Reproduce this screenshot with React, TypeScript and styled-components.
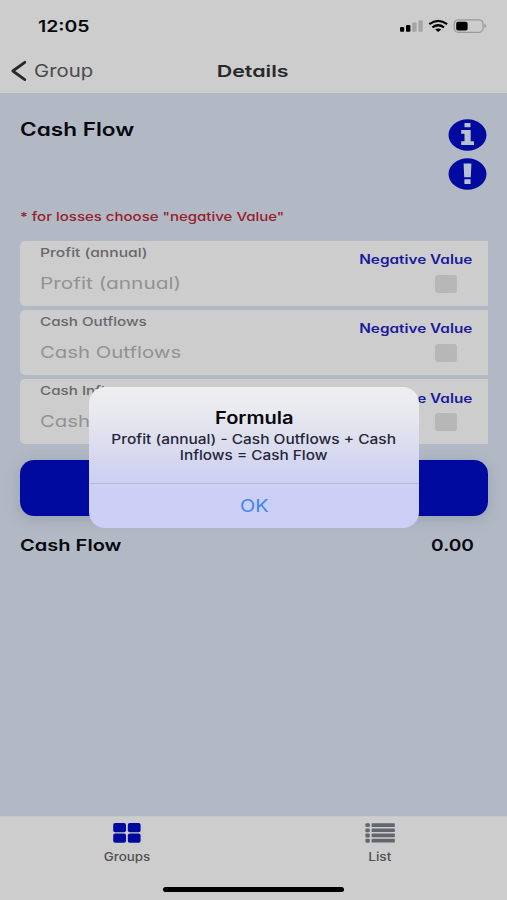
import React from 'react';
import styled, { createGlobalStyle } from 'styled-components';

const GlobalStyle = createGlobalStyle`
  *, *::before, *::after { box-sizing: border-box; }
  body { margin: 0; background: #b2b9c5; font-family: Inter, "Liberation Sans", sans-serif; }
`;

const NAVY = '#000a9e';

type TextProps = {
  $size: number;
  $stretch: number;
  $line?: number;
  $weight?: number;
  $color?: string;
  $origin?: 'left' | 'center' | 'right';
};

/* Wide lettering: the glyphs are stretched from the given edge. */
const WideText = styled.span<TextProps>`
  display: block;
  width: max-content;
  white-space: nowrap;
  font-size: ${p => p.$size}px;
  line-height: ${p => p.$line ?? 20}px;
  font-weight: ${p => p.$weight ?? 400};
  color: ${p => p.$color ?? '#06080d'};
  transform: scaleX(${p => p.$stretch});
  transform-origin: ${p => p.$origin ?? 'left'} center;
`;

const RoundText = styled(WideText)`
  font-feature-settings: 'cv11';
`;

const Screen = styled.div`
  width: 507px;
  height: 900px;
  display: flex;
  flex-direction: column;
  overflow: hidden;
  background: #b2b9c5;
  position: relative;
`;

const StatusBar = styled.header`
  height: 50px;
  padding: 2px 20px 0 38px;
  display: flex;
  align-items: center;
  justify-content: space-between;
  background: #cdcdcd;
`;

const StatusIcons = styled.svg`
  display: block;
  width: 90px;
  height: 20px;
`;

const NavBar = styled.nav`
  height: 43.4px;
  padding: 0 11px 2px 10px;
  display: grid;
  grid-template-columns: 1fr auto 1fr;
  align-items: center;
  background: #cdcdcd;
`;

const BackLink = styled.div`
  display: flex;
  align-items: center;
  gap: 7px;
`;

const Content = styled.main`
  flex: 1;
  padding: 25.6px 19px 0 20.3px;
`;

const Heading = styled.div`
  display: flex;
  justify-content: space-between;
  height: 88px;
`;

const PageTitle = styled.div`
  padding-top: 1px;
`;

const HelpIcons = styled.div`
  display: flex;
  flex-direction: column;
  gap: 7px;
`;

const RoundIcon = styled.svg`
  display: block;
  width: 39px;
  height: 32px;
  margin-right: 1px;
`;

const Fields = styled.div`
  display: flex;
  flex-direction: column;
  gap: 4px;
  margin: 13.6px 0 16px;
`;

const Field = styled.div`
  height: 65.3px;
  border-radius: 5px 0 0 5px;
  background: #cdcdcd;
  display: flex;
  justify-content: space-between;
  padding: 2px 15.5px 0 19.5px;
`;

const FieldInput = styled.div`
  display: flex;
  flex-direction: column;
  gap: 10px;
`;

const FieldToggle = styled.div`
  display: flex;
  flex-direction: column;
  align-items: flex-end;
  padding-top: 7.5px;
`;

const Checkbox = styled.i`
  width: 22px;
  height: 18px;
  margin: 4.7px 15.3px 0 0;
  border-radius: 3px;
  background: #b7b7b7;
`;

const CalcButton = styled.div`
  height: 56px;
  border-radius: 14px;
  background: ${NAVY};
  box-shadow: 0 3px 14px rgba(90, 105, 120, 0.3);
`;

const Result = styled.div`
  display: flex;
  justify-content: space-between;
  padding: 18.3px 14px 0 0;
`;

const TabBar = styled.footer`
  height: 84px;
  background: #cdcdcd;
  border-top: 1px solid #c6c8ca;
`;

const Tabs = styled.div`
  display: grid;
  grid-template-columns: 1fr 1fr;
  height: 70px;
`;

const Tab = styled.div`
  display: flex;
  flex-direction: column;
  align-items: center;
  gap: 4px;
  padding-top: 6px;
`;

const TabIcon = styled.svg`
  display: block;
  width: 30px;
  height: 20px;
`;

const HomeIndicator = styled.div`
  width: 181px;
  height: 5px;
  border-radius: 3px;
  margin: 0 auto;
  background: #000;
`;

const Dialog = styled.section`
  position: absolute;
  left: 89px;
  top: 387px;
  width: 330px;
  height: 141px;
  border-radius: 16px;
  background: linear-gradient(180deg, #eeeeef 0%, #e9eaef 16%, #dcdeee 39%, #d0d2f2 61%, #cccff3 76%, #cdcff8 100%);
  display: flex;
  flex-direction: column;
`;

const DialogBody = styled.div`
  height: 97px;
  padding-top: 21px;
  display: flex;
  flex-direction: column;
  align-items: center;
  border-bottom: 1px solid #b8bbd4;
`;

const DialogMessage = styled.div`
  margin-top: 3px;
  display: flex;
  flex-direction: column;
  align-items: center;
`;

const DialogAction = styled.div`
  flex: 1;
  display: flex;
  align-items: center;
  justify-content: center;
`;

const fields = [
  { name: 'Profit (annual)', label: 1.27, hint: 1.262 },
  { name: 'Cash Outflows', label: 1.235, hint: 1.232 },
  { name: 'Cash Inflows', label: 1.235, hint: 1.232 },
];

function InfoIcon() {
  return (
    <RoundIcon viewBox="0 0 39 32">
      <ellipse cx="19.5" cy="16" rx="19" ry="15.7" fill={NAVY} />
      <path fill="#b9c0d0" d="M16.5 4h6v4.3h-6zM13.2 11h9.5v11.3H26V26H13.2v-3.7h3.3v-7.5h-3.3z" />
    </RoundIcon>
  );
}

function AlertIcon() {
  return (
    <RoundIcon viewBox="0 0 39 32">
      <ellipse cx="19.5" cy="16" rx="19" ry="15.7" fill={NAVY} />
      <path fill="#b9c0d0" d="M15.6 5.5h7.8l-.6 13.8h-6.6zM16.4 21.3h6.2v4.8h-6.2z" />
    </RoundIcon>
  );
}

export default function App() {
  return (
    <>
      <GlobalStyle />
      <Screen>
        <StatusBar>
          <WideText $size={16} $weight={600} $stretch={1.213}>12:05</WideText>
          <StatusIcons viewBox="0 0 90 20">
            <rect x="3" y="11" width="4.2" height="4.8" rx="1" />
            <rect x="9" y="9" width="4.4" height="6.8" rx="1" />
            <rect x="15.2" y="6.6" width="4.4" height="9.2" rx="1" fill="#a5a5a5" />
            <rect x="21.4" y="4.2" width="4.4" height="11.6" rx="1" fill="#a5a5a5" />
            <g fill="none" stroke="#000" strokeWidth="2.3">
              <path d="M32.3 8.2q8.9-6.6 17.8 0" />
              <path d="M35.4 11.4q5.8-4.3 11.6 0" />
            </g>
            <path d="M38.2 13.4q3-1.8 6 0L41.2 15.9z" />
            <rect x="57.2" y="3.9" width="28.8" height="12.4" rx="4" fill="none" stroke="#999" strokeWidth="1.3" />
            <rect x="59.2" y="5.7" width="11.4" height="8.8" rx="2" />
            <path d="M87.4 8q2 .6 2 2t-2 2z" fill="#999" />
          </StatusIcons>
        </StatusBar>
        <NavBar>
          <BackLink>
            <svg width="17" height="22" viewBox="0 0 17 22" fill="none" stroke="#29292c" strokeWidth="2.8" strokeLinecap="round" strokeLinejoin="round">
              <path d="M14.8 2.3 2.8 11l12 8.6" />
            </svg>
            <RoundText $size={17} $stretch={1.195} $color="#4a4a4e">Group</RoundText>
          </BackLink>
          <RoundText $size={16.5} $weight={600} $stretch={1.3} $origin="center" $color="#28282b">Details</RoundText>
        </NavBar>
        <Content>
          <Heading>
            <PageTitle>
              <RoundText $size={18} $weight={600} $stretch={1.255}>Cash Flow</RoundText>
            </PageTitle>
            <HelpIcons>
              <InfoIcon />
              <AlertIcon />
            </HelpIcons>
          </Heading>
          <RoundText $size={12.3} $weight={500} $stretch={1.22} $color="#962029">* for losses choose "negative Value"</RoundText>
          <Fields>
            {fields.map(f => (
              <Field key={f.name}>
                <FieldInput>
                  <RoundText $size={12.3} $weight={500} $stretch={f.label} $color="#68686a">{f.name}</RoundText>
                  <RoundText $size={16.5} $stretch={f.hint} $color="#929294">{f.name}</RoundText>
                </FieldInput>
                <FieldToggle>
                  <RoundText $size={12.5} $weight={600} $stretch={1.225} $origin="right" $color="#1a1a9c">Negative Value</RoundText>
                  <Checkbox />
                </FieldToggle>
              </Field>
            ))}
          </Fields>
          <CalcButton />
          <Result>
            <RoundText $size={16.5} $weight={600} $stretch={1.215}>Cash Flow</RoundText>
            <RoundText $size={16.5} $weight={600} $stretch={1.16} $origin="right">0.00</RoundText>
          </Result>
        </Content>
        <TabBar>
          <Tabs>
            <Tab>
              <TabIcon viewBox="0 0 30 20" fill={NAVY}>
                <rect x="1.2" y="0" width="12.8" height="9.2" rx="2" />
                <rect x="15.8" y="0" width="12.8" height="9.2" rx="2" />
                <rect x="1.2" y="10.6" width="12.8" height="9.2" rx="2" />
                <rect x="15.8" y="10.6" width="12.8" height="9.2" rx="2" />
              </TabIcon>
              <WideText $size={11.5} $weight={500} $stretch={1.16} $origin="center" $color="#505053">Groups</WideText>
            </Tab>
            <Tab>
              <TabIcon viewBox="0 0 30 20" fill="#62676f">
                {[0.2, 5.4, 10.6, 15.8].map(y => (
                  <g key={y}>
                    <rect x="0.4" y={y} width="4.4" height="3.9" rx="1" />
                    <rect x="6.6" y={y} width="23.2" height="3.7" rx="0.6" />
                  </g>
                ))}
              </TabIcon>
              <WideText $size={11.5} $weight={500} $stretch={1.19} $origin="center" $color="#505053">List</WideText>
            </Tab>
          </Tabs>
          <HomeIndicator />
        </TabBar>
        <Dialog>
          <DialogBody>
            <WideText $size={17} $weight={600} $stretch={1.18} $origin="center">Formula</WideText>
            <DialogMessage>
              <WideText $size={13} $line={16} $weight={500} $stretch={1.19} $origin="center" $color="#252637">Profit (annual) - Cash Outflows + Cash</WideText>
              <WideText $size={13} $line={16} $weight={500} $stretch={1.18} $origin="center" $color="#252637">Inflows = Cash Flow</WideText>
            </DialogMessage>
          </DialogBody>
          <DialogAction>
            <WideText $size={17} $stretch={1.17} $origin="center" $color="#3f86ee">OK</WideText>
          </DialogAction>
        </Dialog>
      </Screen>
    </>
  );
}
